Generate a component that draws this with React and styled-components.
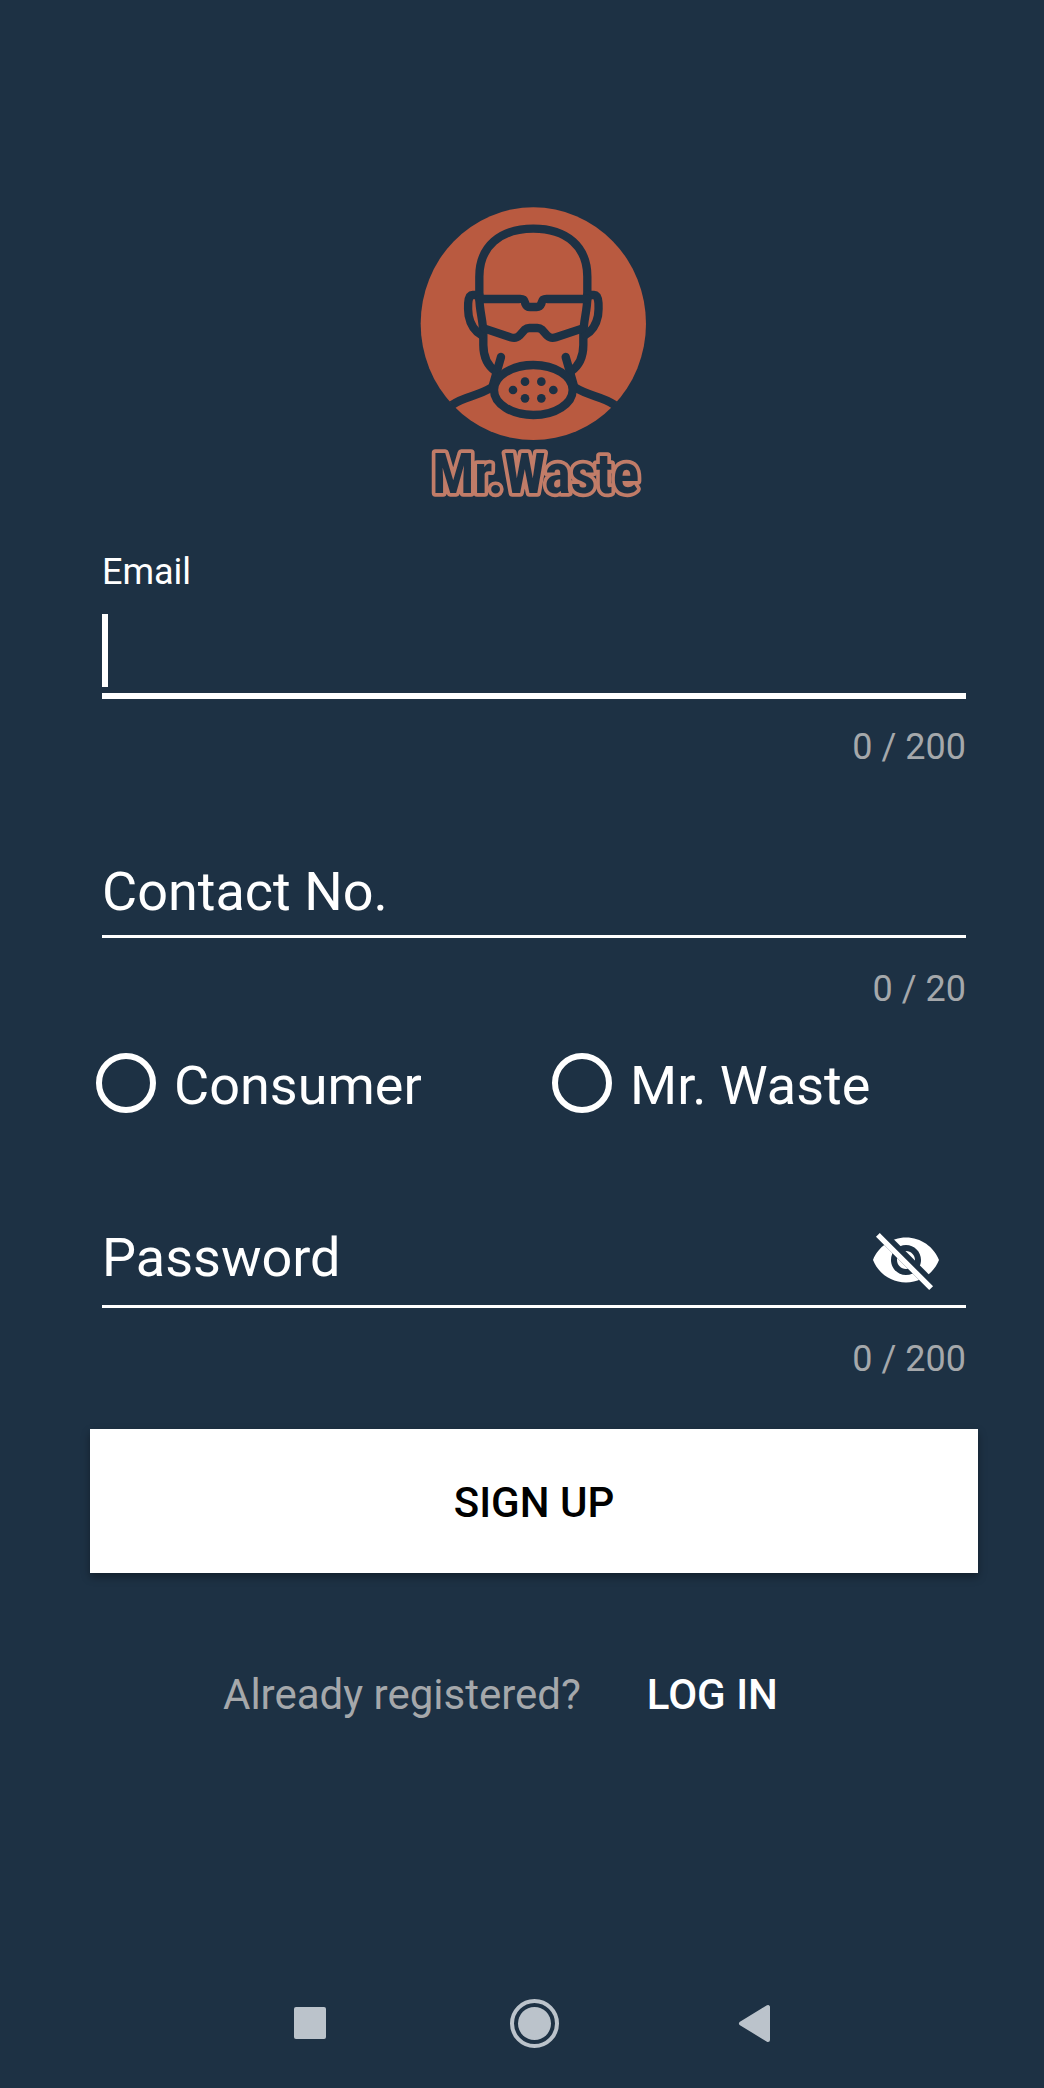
import React, { useState } from "react";
import styled, { createGlobalStyle } from "styled-components";

const NAVY = "#1d3144";
const RUST = "#b95a40";

const GlobalStyle = createGlobalStyle`
  *, *::before, *::after { box-sizing: border-box; }
  body {
    margin: 0;
    background: ${NAVY};
    color: #fff;
    font-family: Roboto, "Liberation Sans", sans-serif;
  }
`;

const Screen = styled.div`
  min-height: 100vh;
  display: flex;
  flex-direction: column;
  padding: 195px 66px 40px 90px;
`;

const Logo = styled.svg`
  display: block;
  width: 248px;
  height: 330px;
  align-self: center;
  overflow: visible;
`;

const Form = styled.form`
  display: flex;
  flex-direction: column;
  margin-top: 26px;
`;

const Field = styled.div`
  display: flex;
  flex-direction: column;
  padding: 0 12px;
  margin-top: ${(p) => p.$gap || 0}px;
`;

const SmallLabel = styled.label`
  height: 42px;
  font-size: 36px;
  line-height: 42px;
`;

const Line = styled.div`
  display: grid;
  grid-template-columns: 1fr auto;
  align-items: end;
  height: ${(p) => (p.$active ? 106 : 103)}px;
  border-bottom: ${(p) => (p.$active ? 6 : 3)}px solid #fff;
`;

const TextInput = styled.input`
  grid-area: 1 / 1;
  width: 100%;
  min-width: 0;
  height: 84px;
  padding: 0;
  border: 0;
  outline: 0;
  background: transparent;
  color: #fff;
  caret-color: ${(p) => (p.$ownCaret ? "transparent" : "#fff")};
  font: 400 54px/64px Roboto, "Liberation Sans", sans-serif;
`;

const Caret = styled.span`
  grid-area: 1 / 1;
  width: 6px;
  height: 73px;
  margin-bottom: 6px;
  background: #fff;
  pointer-events: none;
`;

const RestingLabel = styled.label`
  grid-area: 1 / 1;
  margin-bottom: ${(p) => p.$lift}px;
  font-size: 54px;
  line-height: 64px;
  pointer-events: none;
`;

const Toggle = styled.button`
  grid-area: 1 / 2;
  width: 72px;
  height: 72px;
  margin: 0 24px 9px 0;
  padding: 0;
  border: 0;
  background: none;
  color: #fff;

  svg {
    display: block;
    width: 72px;
    height: 72px;
  }
`;

const Counter = styled.div`
  margin-top: ${(p) => (p.$active ? 27 : 30)}px;
  color: #a5a8ab;
  font-size: 36px;
  line-height: 42px;
  text-align: right;
`;

const Roles = styled.div`
  display: grid;
  grid-template-columns: 1fr 1fr;
  column-gap: 30px;
  margin-top: 43px;
  padding-left: 6px;
`;

const Role = styled.label`
  display: flex;
  align-items: flex-start;
  gap: 18px;
  font-size: 54px;
  line-height: 66px;
`;

const Radio = styled.input`
  appearance: none;
  flex: none;
  width: 60px;
  height: 60px;
  margin: 0;
  border: 6px solid #fff;
  border-radius: 50%;

  &:checked {
    background: radial-gradient(circle, #fff 14px, transparent 15px);
  }
`;

const SignUp = styled.button`
  height: 144px;
  margin-top: 49px;
  padding: 4px 0 0;
  border: 0;
  background: #fff;
  color: #000;
  box-shadow: 0 4px 8px rgba(0, 0, 0, 0.35);
  font: 500 42px/48px Roboto, "Liberation Sans", sans-serif;
`;

const LoginRow = styled.p`
  display: flex;
  gap: 66px;
  margin: 98px 0 0 133px;
  color: #a5a8ab;
  font-size: 42px;
  line-height: 48px;
`;

const LoginLink = styled.a`
  color: #fff;
  font-weight: 500;
  text-decoration: none;
`;

const SystemBar = styled.nav`
  display: flex;
  justify-content: center;
  gap: 176px;
  margin-top: auto;
`;

const SystemButton = styled.button`
  width: 48px;
  height: 49px;
  padding: 0;
  border: 0;
  background: none;
  color: #bbc3cb;

  svg {
    display: block;
    width: 48px;
    height: 49px;
    overflow: visible;
  }
`;

function BrandLogo() {
  return (
    <Logo viewBox="0 0 744 990" role="img" aria-label="Mr.Waste">
      <ellipse cx="370" cy="386" rx="338" ry="349" fill={RUST} />
      <g fill="none" stroke={NAVY} strokeWidth="25" strokeLinecap="round" strokeLinejoin="round">
        <path d="M208 305V245C208 155 270 101 370 101S532 155 532 245V305" />
        <path d="M208 305C208 350 220 375 220 420V450C220 485 232 512 258 530" />
        <path d="M532 305C532 350 520 375 520 420V450C520 485 508 512 482 530" />
        <path d="M208 300H188C170 300 174 345 176 362C181 388 194 408 214 420" />
        <path d="M532 300H552C570 300 566 345 564 362C559 388 546 408 526 420" />
        <path d="M208 312H326C346 310 343 318 346 326Q350 336 360 336H380Q390 336 394 326C397 318 394 310 414 312H532" />
        <path d="M224 401L302 427Q318 432 328 422L344 404Q350 399 358 399H382Q390 399 396 404L412 422Q422 432 438 427L516 401" />
        <path d="M273 486L249 570" />
        <path d="M467 486L491 570" />
        <path d="M126 630C165 602 200 606 246 577" strokeLinecap="butt" />
        <path d="M614 630C575 602 540 606 494 577" strokeLinecap="butt" />
        <ellipse cx="370" cy="585" rx="118" ry="75" />
      </g>
      <g fill={NAVY}>
        <circle cx="345" cy="560" r="13" />
        <circle cx="394" cy="560" r="13" />
        <circle cx="309" cy="585" r="13" />
        <circle cx="430" cy="585" r="13" />
        <circle cx="345" cy="610" r="13" />
        <circle cx="394" cy="610" r="13" />
      </g>
      <text
        x="377"
        y="893"
        textAnchor="middle"
        fontFamily='"Liberation Sans Narrow", "Roboto Condensed", Roboto, sans-serif'
        fontWeight="700"
        fontSize="166"
        fill={NAVY}
        stroke="#c17c68"
        strokeWidth="22"
        strokeLinejoin="round"
        paintOrder="stroke"
      >
        Mr.Waste
      </text>
    </Logo>
  );
}

function EyeOff() {
  return (
    <svg viewBox="0 0 24 24" aria-hidden="true">
      <mask id="strike-gap">
        <rect width="24" height="24" fill="#fff" />
        <path d="M2 4.27L19.73 22L22.27 19.46L4.54 1.73Z" fill="#000" />
      </mask>
      <path
        mask="url(#strike-gap)"
        fill="currentColor"
        d="M12 4.5C7 4.5 2.73 7.61 1 12c1.73 4.39 6 7.5 11 7.5s9.27-3.11 11-7.5c-1.73-4.39-6-7.5-11-7.5zM12 17c-2.76 0-5-2.24-5-5s2.24-5 5-5 5 2.24 5 5-2.24 5-5 5zm0-8c-1.66 0-3 1.34-3 3s1.34 3 3 3 3-1.34 3-3-1.34-3-3-3z"
      />
      <path d="M3.27 4.27L19.74 20.74" stroke="currentColor" strokeWidth="1.8" strokeLinecap="square" />
    </svg>
  );
}

function RestingField({ id, label, type, max, lift, gap, children }) {
  const [value, setValue] = useState("");
  return (
    <Field $gap={gap}>
      <Line>
        {!value && (
          <RestingLabel htmlFor={id} $lift={lift}>
            {label}
          </RestingLabel>
        )}
        <TextInput
          id={id}
          type={type}
          maxLength={max}
          aria-label={label}
          value={value}
          onChange={(e) => setValue(e.target.value)}
        />
        {children}
      </Line>
      <Counter>
        {value.length} / {max}
      </Counter>
    </Field>
  );
}

export default function App() {
  const [email, setEmail] = useState("");
  const [shown, setShown] = useState(false);

  return (
    <>
      <GlobalStyle />
      <Screen>
        <BrandLogo />
        <Form onSubmit={(e) => e.preventDefault()}>
          <Field>
            <SmallLabel htmlFor="email">Email</SmallLabel>
            <Line $active>
              {!email && <Caret aria-hidden="true" />}
              <TextInput
                id="email"
                type="text"
                inputMode="email"
                maxLength={200}
                $ownCaret={!email}
                value={email}
                onChange={(e) => setEmail(e.target.value)}
              />
            </Line>
            <Counter $active>{email.length} / 200</Counter>
          </Field>

          <RestingField id="contact" label="Contact No." type="tel" max={20} lift={11} gap={67} />

          <Roles role="radiogroup" aria-label="Account type">
            <Role>
              <Radio type="radio" name="role" value="consumer" />
              Consumer
            </Role>
            <Role>
              <Radio type="radio" name="role" value="collector" />
              Mr. Waste
            </Role>
          </Roles>

          <RestingField
            id="password"
            label="Password"
            type={shown ? "text" : "password"}
            max={200}
            lift={15}
            gap={86}
          >
            <Toggle type="button" aria-label="Show password" onClick={() => setShown(!shown)}>
              <EyeOff />
            </Toggle>
          </RestingField>

          <SignUp type="submit">SIGN UP</SignUp>
        </Form>

        <LoginRow>
          Already registered?
          <LoginLink href="#login">LOG IN</LoginLink>
        </LoginRow>

        <SystemBar aria-label="System">
          <SystemButton type="button" aria-label="Recent apps">
            <svg viewBox="0 0 48 49">
              <rect x="8" y="8" width="32" height="32" rx="2" fill="currentColor" />
            </svg>
          </SystemButton>
          <SystemButton type="button" aria-label="Home">
            <svg viewBox="0 0 48 49">
              <circle cx="24.5" cy="24.5" r="22.5" fill="none" stroke="currentColor" strokeWidth="4" />
              <circle cx="24.5" cy="24.5" r="16.5" fill="currentColor" />
            </svg>
          </SystemButton>
          <SystemButton type="button" aria-label="Back">
            <svg viewBox="0 0 48 49">
              <path
                d="M7 24.5L34 8V41Z"
                fill="currentColor"
                stroke="currentColor"
                strokeWidth="4"
                strokeLinejoin="round"
              />
            </svg>
          </SystemButton>
        </SystemBar>
      </Screen>
    </>
  );
}
